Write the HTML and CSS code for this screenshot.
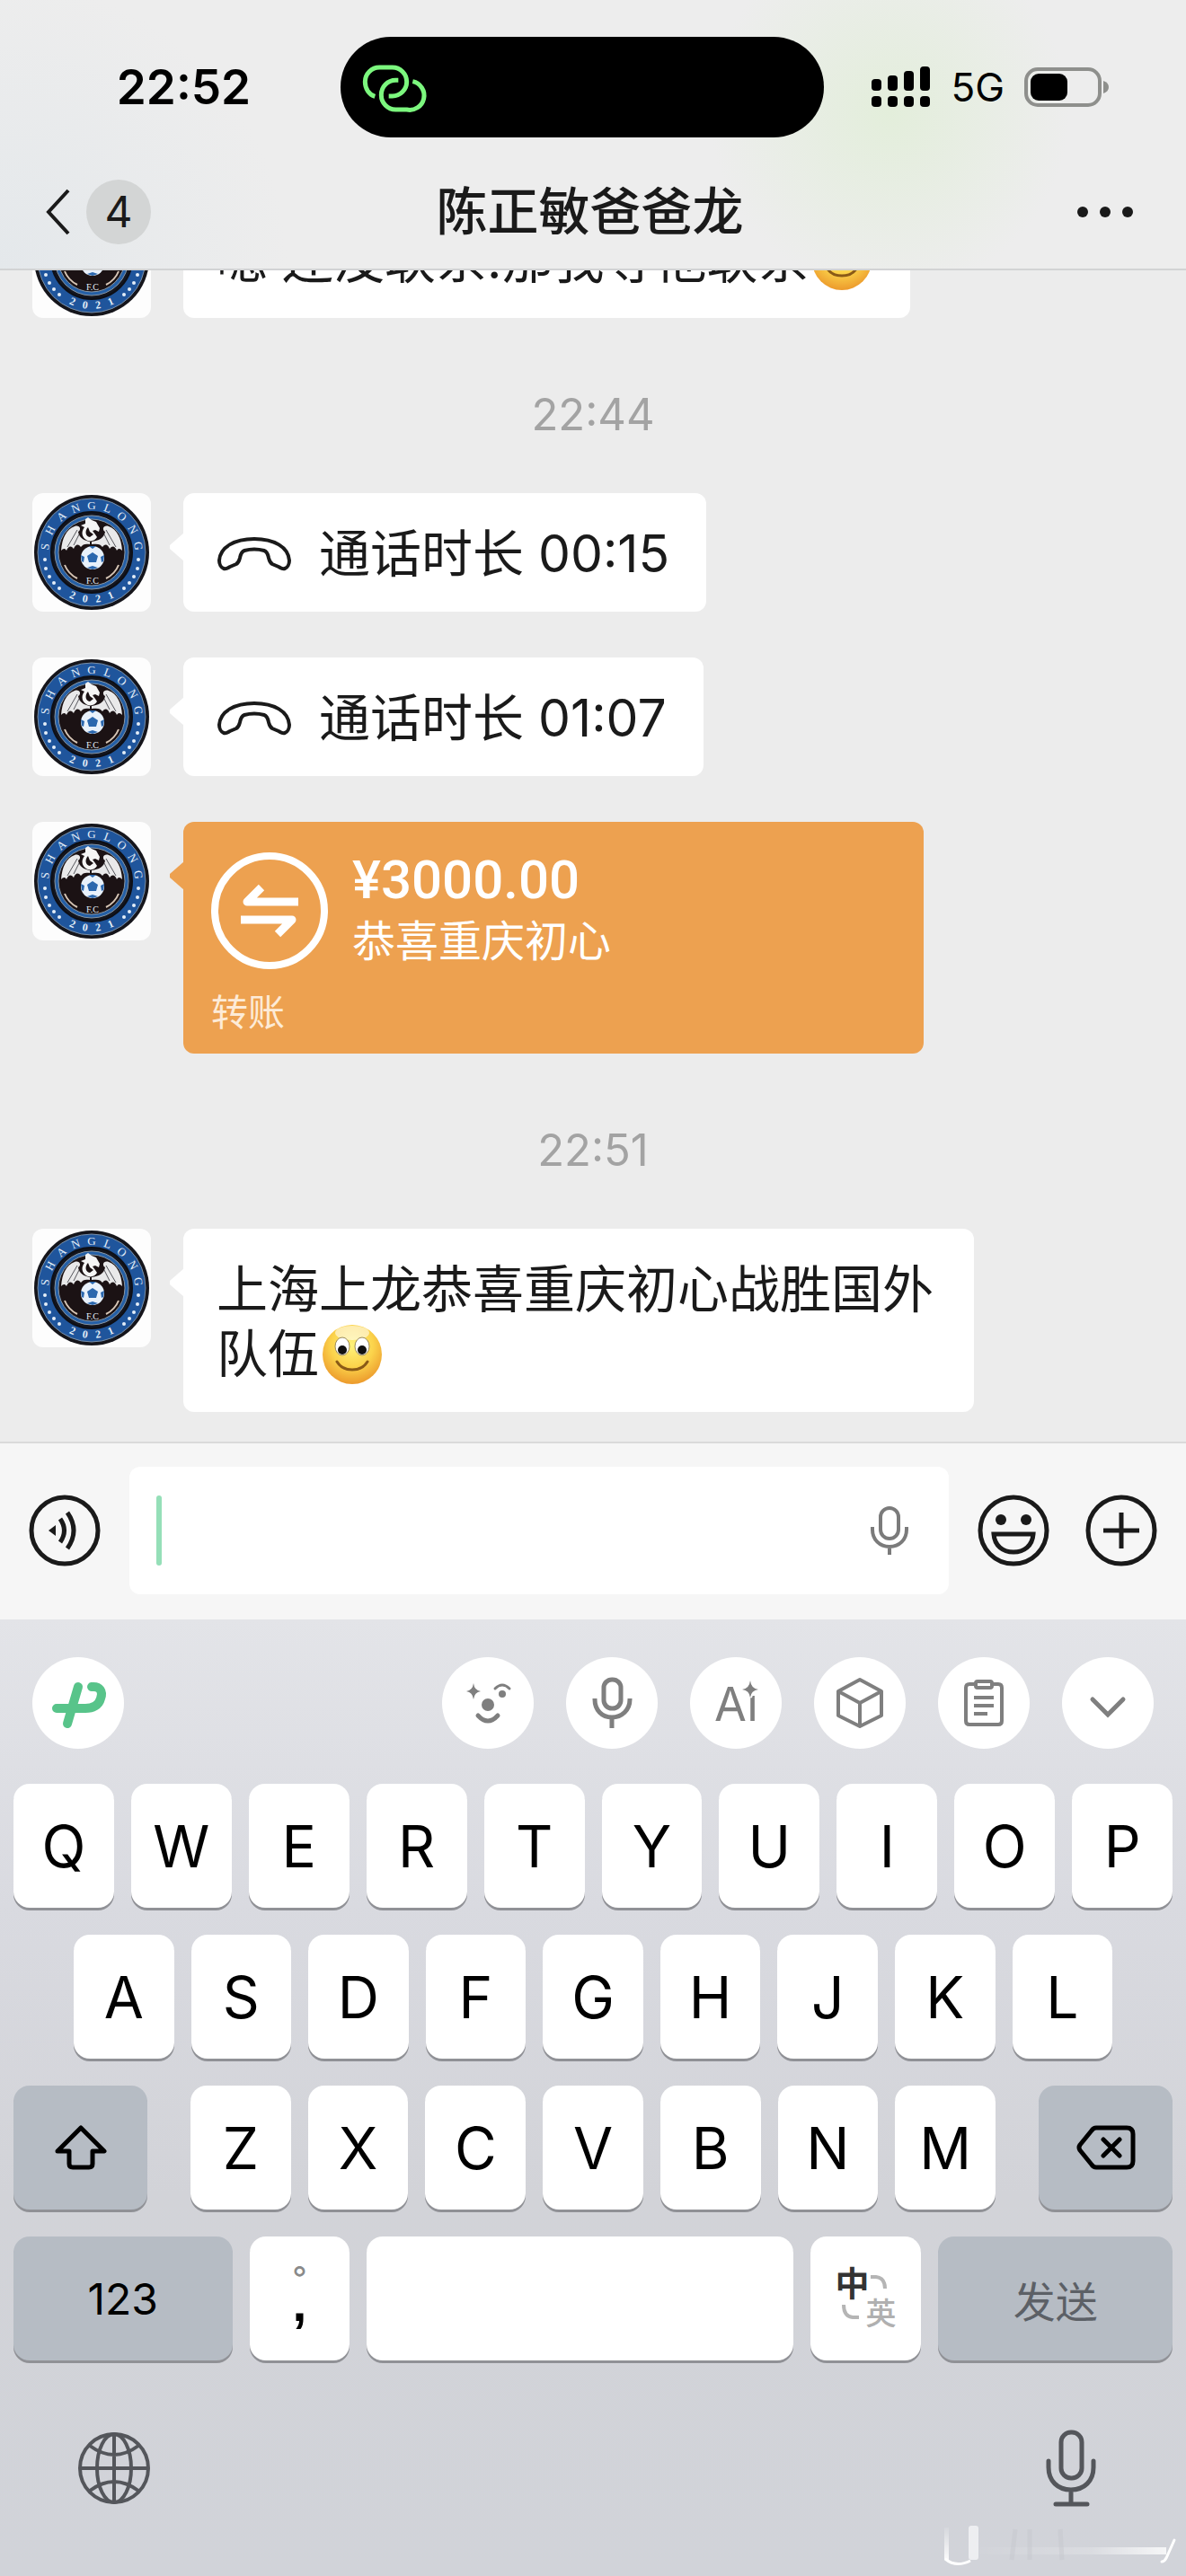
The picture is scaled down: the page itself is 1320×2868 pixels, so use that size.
FILE: index.html
```html
<!DOCTYPE html>
<html lang="zh-CN">
<head>
<meta charset="utf-8">
<meta name="viewport" content="width=device-width, initial-scale=1">
<title>陈正敏爸爸龙</title>
<link rel="stylesheet" href="styles.css">
</head>
<body>
<svg class="defs" aria-hidden="true">
  <defs>
    <radialGradient id="face" cx="50%" cy="35%" r="65%">
      <stop offset="0" stop-color="#fff27a"/><stop offset="0.55" stop-color="#fbd34b"/><stop offset="1" stop-color="#ec9a2c"/>
    </radialGradient>
    <symbol id="smile" viewBox="0 0 72 72">
      <circle cx="37" cy="36" r="33" fill="url(#face)"/>
      <ellipse cx="37" cy="12" rx="19" ry="8" fill="#fff" opacity=".55"/>
      <ellipse cx="26" cy="27" rx="8" ry="10" fill="#fff" stroke="#9a8a5c" stroke-width="1"/>
      <ellipse cx="48" cy="27" rx="8" ry="10" fill="#fff" stroke="#9a8a5c" stroke-width="1"/>
      <circle cx="26" cy="31" r="5" fill="#111"/><circle cx="48" cy="31" r="5" fill="#111"/>
      <path d="M20 44C27 56 47 56 54 44" fill="none" stroke="#8a5a17" stroke-width="3" stroke-linecap="round"/>
    </symbol>
    <symbol id="crest" viewBox="0 0 132 132">
      <rect width="132" height="132" fill="#fdfdfd"/>
      <circle cx="66" cy="66" r="64" fill="#15151b"/>
      <circle cx="66" cy="66" r="60" fill="#1f559c" stroke="#7a8fa6" stroke-width="1"/>
      <circle cx="66" cy="66" r="45" fill="#14161f" stroke="#0d0f16" stroke-width="2"/>
      <circle cx="66" cy="66" r="41" fill="#245fa6" stroke="#8796a5" stroke-width="1"/>
      <circle cx="66" cy="66" r="37" fill="#1b1214" stroke="#8796a5" stroke-width="1"/>
      <g class="crest-text" font-size="13" text-anchor="middle">
        <text x="66" y="18" transform="rotate(-83 66 66)">S</text>
        <text x="66" y="18" transform="rotate(-62 66 66)">H</text>
        <text x="66" y="18" transform="rotate(-40 66 66)">A</text>
        <text x="66" y="18" transform="rotate(-20 66 66)">N</text>
        <text x="66" y="18" transform="rotate(0 66 66)">G</text>
        <text x="66" y="18" transform="rotate(20 66 66)">L</text>
        <text x="66" y="18" transform="rotate(40 66 66)">O</text>
        <text x="66" y="18" transform="rotate(61 66 66)">N</text>
        <text x="66" y="18" transform="rotate(82 66 66)">G</text>
      </g>
      <g class="crest-text" font-size="12" font-weight="700" text-anchor="middle">
        <text x="66" y="122" transform="rotate(24 66 66)">2</text>
        <text x="66" y="122" transform="rotate(8 66 66)">0</text>
        <text x="66" y="122" transform="rotate(-8 66 66)">2</text>
        <text x="66" y="122" transform="rotate(-24 66 66)">1</text>
      </g>
      <g fill="#e4eef8">
        <circle cx="14" cy="74" r="2"/><circle cx="15" cy="84" r="2"/><circle cx="19" cy="93" r="2"/><circle cx="24" cy="100" r="2"/><circle cx="30" cy="106" r="2"/>
        <circle cx="118" cy="74" r="2"/><circle cx="117" cy="84" r="2"/><circle cx="113" cy="93" r="2"/><circle cx="108" cy="100" r="2"/><circle cx="102" cy="106" r="2"/>
      </g>
      <path d="M32 64C33 50 38 40 47 37C53 35 55 41 51 43C52 50 58 53 64 54V57C59 56 56 57 54 60C51 56 48 57 46 62C43 58 40 59 38 64C36 61 34 62 32 64Z" fill="#e9e9ea"/>
      <path d="M100 64C99 50 94 40 85 37C79 35 77 41 81 43C80 50 74 53 66 54V57C73 56 76 57 78 60C81 56 84 57 86 62C89 58 92 59 94 64C96 61 98 62 100 64Z" fill="#e9e9ea"/>
      <path d="M50 41L39 60M52 46L46 58M82 41L93 60M80 46L86 58" fill="none" stroke="#55565c" stroke-width="1"/>
      <path d="M59 29L62 27L66 30L71 32L75 39L74 43L70 41L67 42L70 46L72 49C70 53 64 55 60 52C55 49 54 43 58 38L54 36L59 34Z" fill="#f5f5f5"/>
      <path d="M62 38C58 42 59 48 64 49L68 46L64 43Z" fill="#1b1214"/>
      <circle cx="67" cy="72" r="13" fill="#e8f1fb"/>
      <path d="M67 66L73 70L71 77H63L61 70ZM63 59H71L67 62ZM54 69L58 71L57 77L55 76ZM80 69L76 71L77 77L79 76ZM61 83L67 81L73 83L67 85Z" fill="#2a67ae"/>
      <path d="M36 80Q40 90 50 95M96 80Q92 90 82 95" fill="none" stroke="#d7c6b6" stroke-width="2"/>
      <text class="crest-text" x="67" y="101" font-size="10" text-anchor="middle">F.C</text>
    </symbol>
    <symbol id="call" viewBox="0 0 84 40">
      <path d="M3 27C4 12 20 3 42 3S80 12 81 27C81 31 79 35 76 36C73 37 71 35 69 34L62 31C59 29 59 28 58 24C57 19 56 17 53 16C46 14 38 14 31 16C28 17 27 19 26 24C25 28 25 29 22 31L15 34C13 35 11 37 8 36C5 35 3 31 3 27Z" fill="none" stroke="#1a1a1a" stroke-width="4" stroke-linejoin="round"/>
    </symbol>
  </defs>
</svg>

<div class="phone">
  <header class="top">
    <div class="status">
      <time class="clock">22:52</time>
      <div class="island">
        <svg width="110" height="90" viewBox="0 0 330 270" fill="none" stroke="#7cf77e" stroke-width="15" aria-hidden="true">
          <path d="M82 166C62 160 49 140 49 117A48 48 0 0 1 97 69H140A48 48 0 0 1 140 165H128"/>
          <path d="M160 112H151A48 49 0 0 0 151 210H188A48 48 0 0 0 208 116"/>
        </svg>
      </div>
      <div class="radio">
        <svg width="66" height="46" viewBox="0 0 66 46" aria-hidden="true">
          <rect x="0" y="14" width="11" height="13" rx="4"/><rect x="18" y="10" width="11" height="17" rx="4"/><rect x="36" y="5" width="11" height="22" rx="4"/><rect x="54" y="0" width="11" height="27" rx="4"/>
          <rect x="0" y="33" width="11" height="12" rx="4"/><rect x="18" y="33" width="11" height="12" rx="4"/><rect x="36" y="33" width="11" height="12" rx="4"/><rect x="54" y="33" width="11" height="12" rx="4"/>
        </svg>
        <span class="network">5G</span>
        <svg width="94" height="44" viewBox="0 0 94 44" aria-hidden="true">
          <rect x="2" y="2" width="82" height="40" rx="13" fill="none" stroke="#8e8f8c" stroke-width="4"/>
          <rect x="7" y="7" width="41" height="30" rx="9"/>
          <path d="M88 15Q94 17 94 22T88 29Z" fill="#8e8f8c"/>
        </svg>
      </div>
    </div>
    <nav class="nav">
      <button class="back" type="button" aria-label="返回">
        <svg width="27" height="52" viewBox="0 0 27 52" aria-hidden="true"><path d="M25 2L3 26L25 50" fill="none" stroke="#1a1a1a" stroke-width="4"/></svg>
        <span class="unread">4</span>
      </button>
      <h1 class="title">陈正敏爸爸龙</h1>
      <button class="more" type="button" aria-label="更多">
        <svg width="64" height="14" viewBox="0 0 64 14" fill="#1a1a1a" aria-hidden="true"><circle cx="7" cy="7" r="6"/><circle cx="32" cy="7" r="6"/><circle cx="57" cy="7" r="6"/></svg>
      </button>
    </nav>
  </header>

  <main class="chat">
    <div class="message">
      <svg class="avatar" role="img" aria-label="头像"><use href="#crest"/></svg>
      <p class="bubble">嗯 还没联系.那我等他联系<svg class="emoji"><use href="#smile"/></svg></p>
    </div>
    <time class="stamp">22:44</time>
    <div class="message">
      <svg class="avatar" role="img" aria-label="头像"><use href="#crest"/></svg>
      <p class="bubble bubble-call"><svg class="call"><use href="#call"/></svg>通话时长 00:15</p>
    </div>
    <div class="message">
      <svg class="avatar" role="img" aria-label="头像"><use href="#crest"/></svg>
      <p class="bubble bubble-call"><svg class="call"><use href="#call"/></svg>通话时长 01:07</p>
    </div>
    <div class="message">
      <svg class="avatar" role="img" aria-label="头像"><use href="#crest"/></svg>
      <div class="bubble bubble-transfer">
        <div class="transfer-main">
          <svg width="130" height="130" viewBox="0 0 130 130" fill="none" stroke="#fff" aria-hidden="true">
            <circle cx="65" cy="65" r="61" stroke-width="8"/>
            <path d="M97 55H40L56 39M33 75H90L74 91" stroke-width="9" stroke-linejoin="round"/>
          </svg>
          <div>
            <div class="amount">¥3000.00</div>
            <div class="note">恭喜重庆初心</div>
          </div>
        </div>
        <div class="kind">转账</div>
      </div>
    </div>
    <time class="stamp">22:51</time>
    <div class="message">
      <svg class="avatar" role="img" aria-label="头像"><use href="#crest"/></svg>
      <p class="bubble">上海上龙恭喜重庆初心战胜国外队伍<svg class="emoji"><use href="#smile"/></svg></p>
    </div>
  </main>

  <form class="composer">
    <button class="round" type="button" aria-label="语音">
      <svg width="80" height="80" viewBox="0 0 80 80" fill="none" stroke="#1a1a1a" stroke-width="5" aria-hidden="true">
        <circle cx="40" cy="40" r="37"/><path d="M22 40L30 34V46Z" fill="#1a1a1a" stroke="none"/><path d="M35 27Q44 40 35 53M43 20Q57 40 43 60"/>
      </svg>
    </button>
    <div class="field">
      <span class="cursor"></span>
      <input type="text" aria-label="输入消息">
      <button type="button" aria-label="语音输入">
        <svg width="42" height="54" viewBox="0 0 42 54" fill="none" stroke="#7b7b7b" stroke-width="4" aria-hidden="true">
          <rect x="11" y="2" width="20" height="34" rx="10"/><path d="M2 23V26C2 37 10 45 21 45S40 37 40 26V23M21 45V54"/>
        </svg>
      </button>
    </div>
    <button class="round" type="button" aria-label="表情">
      <svg width="80" height="80" viewBox="0 0 80 80" fill="none" stroke="#1a1a1a" stroke-width="5" aria-hidden="true">
        <circle cx="40" cy="40" r="37"/><circle cx="26" cy="28" r="6" fill="#1a1a1a" stroke="none"/><circle cx="54" cy="28" r="6" fill="#1a1a1a" stroke="none"/><path d="M18 44H62C61 57 52 64 40 64S19 57 18 44Z"/>
      </svg>
    </button>
    <button class="round attach" type="button" aria-label="更多功能">
      <svg width="80" height="80" viewBox="0 0 80 80" fill="none" stroke="#1a1a1a" stroke-width="5" aria-hidden="true">
        <circle cx="40" cy="40" r="37"/><path d="M40 20V60M20 40H60"/>
      </svg>
    </button>
  </form>

  <section class="keyboard" aria-label="键盘">
    <div class="tools">
      <button class="tool tool-brand" type="button" aria-label="输入法">
        <svg viewBox="0 0 102 102" fill="none" stroke="#58c48a" stroke-width="10" stroke-linecap="round" aria-hidden="true"><path d="M51 33L39 74M66 33C75 32 79 38 76 46C74 54 67 57 59 57H27"/></svg>
      </button>
      <button class="tool" type="button" aria-label="表情">
        <svg viewBox="0 0 102 102" fill="none" stroke="#7f7f7f" stroke-width="4" stroke-linecap="round" aria-hidden="true">
          <path d="M35 29Q36 37 43 38Q36 39 35 47Q34 39 27 38Q34 37 35 29Z" fill="#7f7f7f" stroke="none"/>
          <circle cx="51" cy="53" r="7" fill="#7f7f7f" stroke="none"/><circle cx="67" cy="41" r="4" fill="#7f7f7f" stroke="none"/>
          <path d="M59 35Q67 27 75 35" stroke-width="3"/><path d="M40 65Q51 77 62 65" stroke-width="5"/>
        </svg>
      </button>
      <button class="tool" type="button" aria-label="语音">
        <svg viewBox="0 0 102 102" fill="none" stroke="#7f7f7f" stroke-width="5" aria-hidden="true">
          <rect x="42" y="25" width="19" height="32" rx="9"/><path d="M32 46V47C32 59 40 67 51 67S71 59 71 47V46M51 67V79"/>
        </svg>
      </button>
      <button class="tool" type="button" aria-label="Ai">
        <svg viewBox="0 0 102 102" aria-hidden="true">
          <text class="ai" x="27" y="71">Ai</text>
          <path d="M67 26Q68 35 76 36Q68 37 67 45Q66 37 58 36Q66 35 67 26Z" fill="#7f7f7f" stroke="#fff" stroke-width="4" paint-order="stroke"/>
        </svg>
      </button>
      <button class="tool" type="button" aria-label="工具">
        <svg viewBox="0 0 102 102" fill="none" stroke="#7f7f7f" stroke-width="4" stroke-linejoin="round" aria-hidden="true"><path d="M51 25L75 38V65L51 77L27 65V38ZM27 38L51 51L75 38M51 51V77"/></svg>
      </button>
      <button class="tool" type="button" aria-label="剪贴板">
        <svg viewBox="0 0 102 102" fill="none" stroke="#7f7f7f" stroke-width="4" aria-hidden="true">
          <path d="M41 30H35Q31 30 31 34V71Q31 75 35 75H67Q71 75 71 71V34Q71 30 67 30H61"/><rect x="42" y="27" width="18" height="7" rx="2"/><path d="M40 45H62M40 54H62M40 63H55"/>
        </svg>
      </button>
      <button class="tool" type="button" aria-label="收起">
        <svg viewBox="0 0 102 102" fill="none" stroke="#7f7f7f" stroke-width="5" stroke-linecap="round" aria-hidden="true"><path d="M34 47L51 64L68 47"/></svg>
      </button>
    </div>

    <div class="keys">
      <div class="row">
        <button type="button">Q</button><button type="button">W</button><button type="button">E</button><button type="button">R</button><button type="button">T</button><button type="button">Y</button><button type="button">U</button><button type="button">I</button><button type="button">O</button><button type="button">P</button>
      </div>
      <div class="row row-inset">
        <button type="button">A</button><button type="button">S</button><button type="button">D</button><button type="button">F</button><button type="button">G</button><button type="button">H</button><button type="button">J</button><button type="button">K</button><button type="button">L</button>
      </div>
      <div class="row row-shift">
        <button class="mod" type="button" aria-label="大写">
          <svg width="58" height="50" viewBox="0 0 58 50" fill="none" stroke="#000" stroke-width="5" stroke-linejoin="round" aria-hidden="true"><path d="M29 3L55 29H42V43Q42 47 38 47H20Q16 47 16 43V29H3Z"/></svg>
        </button>
        <div class="row letters">
          <button type="button">Z</button><button type="button">X</button><button type="button">C</button><button type="button">V</button><button type="button">B</button><button type="button">N</button><button type="button">M</button>
        </div>
        <button class="mod" type="button" aria-label="删除">
          <svg width="66" height="50" viewBox="0 0 66 50" fill="none" stroke="#000" stroke-width="5" stroke-linecap="round" stroke-linejoin="round" aria-hidden="true"><path d="M22 3H56Q63 3 63 10V40Q63 47 56 47H22Q19 47 17 44L4 28Q2 25 4 22L17 6Q19 3 22 3ZM30 16L48 34M48 16L30 34"/></svg>
        </button>
      </div>
      <div class="row row-space">
        <button class="mod num" type="button">123</button>
        <button class="punct" type="button"><span class="full-stop">°</span><span class="comma">,</span></button>
        <button class="space" type="button" aria-label="空格"></button>
        <button class="lang" type="button" aria-label="中英切换">
          <span class="zh">中</span>
          <svg width="32" height="32" viewBox="0 0 32 32" fill="none" stroke="#b5b5b5" stroke-width="4" aria-hidden="true"><path d="M5 9H11Q21 10 21 22"/></svg>
          <svg width="32" height="32" viewBox="0 0 32 32" fill="none" stroke="#b5b5b5" stroke-width="4" aria-hidden="true"><path d="M9 6Q9 19 19 20H26"/></svg>
          <span class="en">英</span>
        </button>
        <button class="mod send" type="submit">发送</button>
      </div>
    </div>

    <div class="dock">
      <button type="button" aria-label="切换键盘">
        <svg width="82" height="82" viewBox="0 0 82 82" fill="none" stroke="#54565b" stroke-width="4" aria-hidden="true">
          <circle cx="41" cy="41" r="38"/><ellipse cx="41" cy="41" rx="19" ry="38"/><path d="M41 3V79M3 41H79M14 16Q41 36 68 16M14 66Q41 46 68 66"/>
        </svg>
      </button>
      <button type="button" aria-label="听写">
        <svg width="56" height="86" viewBox="0 0 56 86" fill="none" stroke="#54565b" stroke-width="5" stroke-linecap="round" aria-hidden="true">
          <rect x="17" y="3" width="23" height="51" rx="11"/><path d="M3 35V42C3 57 13 67 28 67S53 57 53 42V35M28 67V83M11 83H46"/>
        </svg>
      </button>
      <svg class="smear" width="270" height="58" viewBox="0 0 270 58" fill="none" aria-hidden="true">
        <defs>
          <linearGradient id="streak"><stop offset="0" stop-color="#fff" stop-opacity=".02"/><stop offset=".6" stop-color="#fff" stop-opacity=".2"/><stop offset="1" stop-color="#fff" stop-opacity=".8"/></linearGradient>
          <linearGradient id="drip" x2="0" y2="1"><stop offset="0" stop-color="#fff" stop-opacity=".1"/><stop offset="1" stop-color="#fff" stop-opacity=".9"/></linearGradient>
        </defs>
        <rect x="40" y="26" width="208" height="8" fill="url(#streak)"/>
        <rect x="1" y="4" width="5" height="36" fill="url(#drip)"/>
        <path d="M2 39Q14 49 30 41" stroke="#fff" stroke-width="3"/>
        <rect x="28" y="2" width="11" height="38" rx="3" fill="#f4f5f6" opacity=".8"/>
        <path d="M80 6L76 40M96 6V40M130 6L132 40" stroke="#c6c8cd" stroke-width="5" opacity=".5"/>
        <path d="M257 18L248 38Q246 42 243 42" stroke="#fff" stroke-width="3" stroke-linecap="round"/>
      </svg>
    </div>
  </section>
</div>
</body>
</html>
```
FILE: styles.css
```css
* { box-sizing: border-box; }

body {
  margin: 0;
  font-family: Inter, "Noto Sans CJK SC", sans-serif;
  color: #1a1a1a;
}

button, input {
  margin: 0;
  padding: 0;
  border: 0;
  background: none;
  color: inherit;
  font: inherit;
}

svg { display: block; flex: none; }
.defs { position: absolute; width: 0; height: 0; }

.phone {
  display: flex;
  flex-direction: column;
  height: 100vh;
  overflow: hidden;
  background: #ececec;
}

/* Status bar and title */
.top {
  flex: none;
  border-bottom: 2px solid #d2d3d4;
  background:
    radial-gradient(circle at 75% 42%, #e3eedb 0, #e3eedb00 200px),
    radial-gradient(circle at 0 100%, #e4e8eb 0, #e4e8eb00 320px),
    #ededed;
}

.status {
  display: grid;
  grid-template-columns: 379fr 538fr 403fr;
  align-items: center;
  padding-top: 41px;
  color: #000;
}

.clock {
  padding-left: 30px;
  font-size: 53px;
  font-weight: 600;
  line-height: 64px;
  text-align: center;
}

.island {
  display: flex;
  align-items: center;
  height: 112px;
  padding-left: 11px;
  border-radius: 56px;
  background: #000;
}

.radio {
  display: flex;
  align-items: center;
  justify-content: flex-end;
  gap: 22px;
  padding-right: 86px;
}

.network { font-size: 44px; line-height: 48px; }

.nav {
  display: grid;
  grid-template-columns: 1fr auto 1fr;
  align-items: center;
  height: 146px;
  padding: 20px 58px 0 51px;
}

.back {
  display: flex;
  align-items: center;
  gap: 18px;
  justify-self: start;
}

.unread {
  width: 72px;
  border-radius: 36px;
  background: #d3d5d5;
  font-size: 48px;
  line-height: 72px;
  text-align: center;
}

.title {
  margin: 0;
  font-size: 57px;
  font-weight: 500;
  line-height: 72px;
}

.more { justify-self: end; }

/* Conversation, pinned to its newest message */
.chat {
  display: flex;
  flex: 1;
  flex-direction: column;
  justify-content: flex-end;
  gap: 51px;
  min-height: 0;
  padding: 0 36px 33px;
  overflow: hidden;
}

.stamp {
  padding: 27px 0 6px;
  color: #a3a3a3;
  font-size: 49px;
  line-height: 60px;
  text-align: center;
}

.message {
  display: flex;
  flex: none;
  align-items: flex-start;
  gap: 36px;
}

.avatar {
  width: 132px;
  height: 132px;
  border-radius: 12px;
}

.crest-text { fill: #e4eef8; font-family: "Liberation Serif", serif; }

.bubble {
  position: relative;
  max-width: 880px;
  margin: 0;
  padding: 32px 41px 28px 37px;
  border-radius: 12px;
  background: #fff;
  font-size: 57px;
  line-height: 72px;
}

.bubble::before {
  position: absolute;
  top: 44px;
  left: -15px;
  width: 16px;
  height: 32px;
  background: inherit;
  clip-path: polygon(100% 0, 0 44%, 0 56%, 100% 100%);
  content: "";
}

.bubble-call { display: flex; align-items: center; gap: 30px; }
.call { width: 84px; height: 40px; }

.emoji {
  display: inline-block;
  width: 72px;
  height: 72px;
  vertical-align: top;
}

.bubble-transfer {
  flex: 0 1 824px;
  padding: 31px;
  padding-bottom: 18px;
  background: #eda150;
  color: #fff;
}

.transfer-main { display: flex; align-items: center; gap: 27px; }

.amount {
  font-family: Roboto, sans-serif;
  font-size: 60px;
  font-weight: 500;
  line-height: 68px;
}

.note { font-size: 48px; line-height: 68px; }
.kind { padding-top: 17px; color: #fdebd7; font-size: 41px; line-height: 56px; }

/* Message entry */
.composer {
  display: flex;
  flex: none;
  align-items: center;
  gap: 32px;
  padding: 26px 32px 28px;
  border-top: 2px solid #dadada;
  background: #f6f6f6;
}

.round { flex: none; width: 80px; height: 80px; }
.attach { margin-left: 8px; }

.field {
  display: flex;
  flex: 1;
  align-items: center;
  min-width: 0;
  height: 142px;
  padding: 0 45px 0 30px;
  border-radius: 12px;
  background: #fff;
}

.field input { flex: 1; min-width: 0; height: 100%; padding: 0 12px; font-size: 57px; outline: 0; }
.cursor { width: 6px; height: 78px; border-radius: 3px; background: #95dfb8; }

/* Keyboard */
.keyboard {
  flex: none;
  padding-top: 42px;
  background: linear-gradient(#e3e4e8, #d9dae0 30%, #d2d3d8 60%, #d1d3d9);
  color: #000;
}

.tools { display: flex; justify-content: flex-end; gap: 36px; padding: 0 36px; }
.tool { width: 102px; height: 102px; border-radius: 51px; background: #fff; }
.tool-brand { margin-right: auto; }
.ai { fill: #7f7f7f; font-size: 52px; }

.keys { display: flex; flex-direction: column; gap: 30px; padding: 39px 15px 0; }
.row { display: flex; gap: 19px; }
.row-inset { padding: 0 67px; }
.row-shift { gap: 48px; }
.letters { flex: 1; }

.row button {
  display: flex;
  flex: 1 1 0;
  align-items: center;
  justify-content: center;
  height: 138px;
  border-radius: 18px;
  background: #fff;
  box-shadow: 0 3px 0 #909196;
  font-size: 64px;
}

.row .mod { background: #b6bcc4; }
.row-shift .mod { flex: 0 0 149px; }
.row .num { flex-grow: 244; font-size: 48px; }
.row .punct { flex-direction: column; flex-grow: 112; justify-content: flex-start; padding-top: 28px; }
.row .space { flex-grow: 475; }
.row .lang { display: grid; flex-grow: 124; grid-template-columns: 34px 34px; place-content: center; line-height: 34px; }
.row .send { flex-grow: 261; color: #5c6066; font-size: 47px; }
.full-stop { color: #8a8a8a; font-size: 36px; line-height: 36px; }
.comma { font-family: "Liberation Sans", sans-serif; font-size: 57px; font-weight: 700; line-height: 20px; }
.zh { color: #333; font-size: 38px; font-weight: 700; }
.en { color: #b0b0b0; font-size: 34px; font-weight: 500; }

.dock {
  position: relative;
  display: flex;
  align-items: center;
  justify-content: space-between;
  height: 240px;
  padding: 0 100px 0 86px;
}

.smear { position: absolute; right: 0; bottom: 0; }
```
